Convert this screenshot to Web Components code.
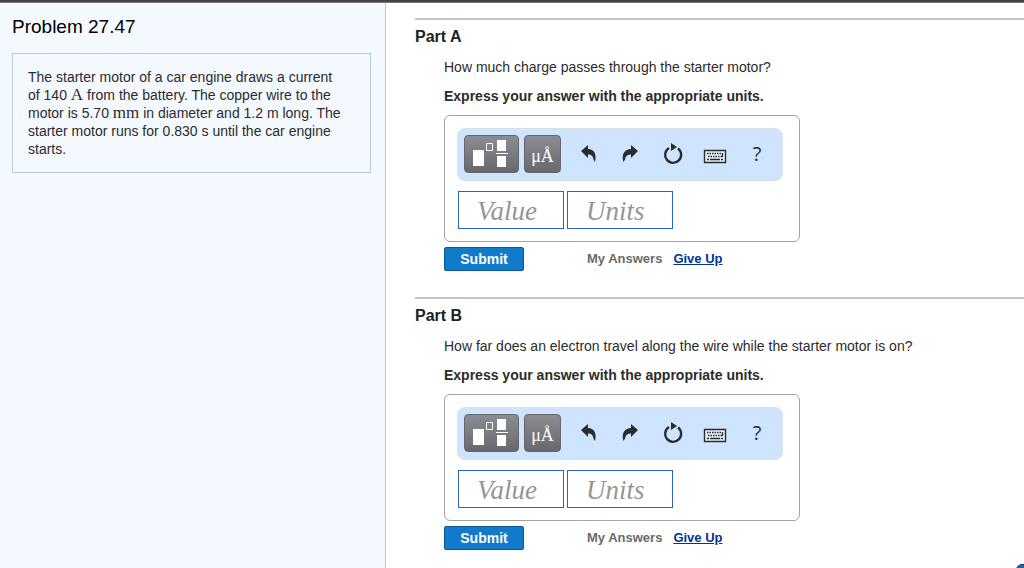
<!DOCTYPE html>
<html lang="en">
<head>
<meta charset="utf-8">
<title>Problem 27.47</title>
<style>
body { margin: 0; background: #fff; color: #2b2b2b; font: 14px/18px "Liberation Sans", Arial, sans-serif; }
</style>
</head>
<body>
<homework-page>
  <problem-panel slot="side" heading="Problem 27.47">The starter motor of a car engine draws a current of 140 <math-unit>A</math-unit> from the battery. The copper wire to the motor is 5.70 <math-unit>mm</math-unit> in diameter and 1.2 m long. The starter motor runs for 0.830 s until the car engine starts.</problem-panel>
  <problem-part heading="Part A">How much charge passes through the starter motor?</problem-part>
  <problem-part heading="Part B">How far does an electron travel along the wire while the starter motor is on?</problem-part>
</homework-page>
<script>
class BaseElement extends HTMLElement {
  constructor() {
    super();
    this.attachShadow({ mode: "open" });
  }
  connectedCallback() {
    this.shadowRoot.innerHTML = this.render();
  }
}

customElements.define("homework-page", class extends BaseElement {
  render() {
    return `<style>
      :host { display: flex; flex-direction: column; min-height: 100vh; }
      header { height: 3px; box-sizing: border-box; background: #444; border-bottom: 1px solid #777; }
      .columns { flex: 1; display: flex; }
      aside { flex: 0 1 386px; box-sizing: border-box; background: #f4f9ff; border-right: 1px solid #b4c8dd; }
      main { flex: 1; min-width: 0; padding: 15px 0 0 29px; display: flex; flex-direction: column; gap: 26px; }
      .corner { position: fixed; right: -20px; bottom: -26px; width: 28px; height: 30px; box-sizing: border-box; border: 1px solid #12386b; border-radius: 6px; background: #2462a8; }
    </style>
    <header></header>
    <div class="columns">
      <aside><slot name="side"></slot></aside>
      <main><slot></slot></main>
    </div>
    <div class="corner"></div>`;
  }
});

customElements.define("math-unit", class extends BaseElement {
  render() {
    return `<style>:host { display: inline; font-family: "Liberation Serif", "Times New Roman", serif; font-size: 17px; line-height: 14px; }</style><slot></slot>`;
  }
});

customElements.define("problem-panel", class extends BaseElement {
  render() {
    return `<style>
      :host { display: block; padding: 13px 14px 16px 12px; }
      h1 { margin: 0 0 15px; font-size: 19px; line-height: 22px; font-weight: 400; color: #000; }
      .statement { padding: 14px 25px 14px 15px; border: 1px solid #b4cbdf; }
    </style>
    <h1>${this.getAttribute("heading")}</h1>
    <div class="statement"><slot></slot></div>`;
  }
});

customElements.define("tool-bar", class extends BaseElement {
  render() {
    return `<style>
      :host { display: flex; align-items: flex-start; box-sizing: border-box; height: 53px; padding: 6px 6px 0; border: 1px solid #dcdfe4; border-radius: 8px; background: #cfe5ff; }
      button { flex: none; display: grid; place-items: center; padding: 0; border: 0; background: none; color: #2c2c2c; font: 20px/24px "Open Sans", sans-serif; width: 24px; height: 38px; margin-left: 18px; }
      .dark { border: 1px solid #66666c; border-radius: 4px; background: linear-gradient(#8c8c94, #68686c); color: #fff; box-sizing: border-box; }
      .template { width: 55px; margin-left: 0; }
      .units { width: 37px; margin: 0 -2px 0 5px; padding-top: 4px; font: 18px/20px "Liberation Serif", serif; }
      svg { display: block; }
    </style>
    <button class="dark template" aria-label="Templates"><svg width="53" height="36" viewBox="0 0 53 36">
      <path d="M8 14h11v16H8zM32 4h9v11h-9zM32 20h9v11h-9z" fill="#fff"/>
      <path d="M31 17h12v1H31z" fill="#fff"/>
      <path d="M21.500 7.500h6v7h-6z" fill="none" stroke="#fff"/>
    </svg></button>
    <button class="dark units" aria-label="Symbols">μÅ</button>
    <button aria-label="Undo"><svg width="24" height="24" viewBox="0 0 24 24"><path d="M4 9 11 3V7C17 7 20 12 18 20L16.500 17.500C16 14 14.500 12.500 11 12.500V16Z" fill="currentColor"/></svg></button>
    <button aria-label="Redo"><svg width="24" height="24" viewBox="0 0 24 24"><path d="M19 9 12 3V7C6 7 2 12 4.500 20L6 17.500C6.500 14 8.500 12.500 12 12.500V16Z" fill="currentColor"/></svg></button>
    <button aria-label="Reset"><svg width="24" height="24" viewBox="0 0 24 24"><path d="M8 6A8 8 0 1 0 17 6.500" fill="none" stroke="currentColor" stroke-width="2.400"/><path d="M10 1 16 5 10 9Z" fill="currentColor"/></svg></button>
    <button aria-label="Keyboard"><svg width="24" height="24" viewBox="0 0 24 24"><path d="M1.500 8.500h21v12h-21z" fill="#e5f1ff" stroke="#2c2c2c" stroke-width="1.400"/><path d="M4 11.500h15M5 14.500h14" stroke="#2c2c2c" stroke-width="1.500" stroke-dasharray="1.500 1"/><path d="M4 17.500h2M7 17.500h10M18 17.500h2M19.500 11v4" stroke="#2c2c2c" stroke-width="1.300"/></svg></button>
    <button aria-label="Help">?</button>`;
  }
});

customElements.define("answer-box", class extends BaseElement {
  render() {
    return `<style>
      :host { display: block; box-sizing: border-box; max-width: 356px; padding: 12px 16px 12px 12px; border: 1px solid #a3a3a3; border-radius: 6px; }
      .fields { display: flex; gap: 3px; margin: 10px 0 0 1px; }
      input { box-sizing: border-box; flex: 0 1 106px; min-width: 0; height: 38px; margin: 0; padding: 2px 0 0 18px; border: 1px solid #2b62c8; border-radius: 0; background: #fff; color: #333; font: italic 27px/34px "Liberation Serif", "Times New Roman", serif; }
      input::placeholder { color: #959595; opacity: 1; }
    </style>
    <tool-bar></tool-bar>
    <div class="fields">
      <input type="text" placeholder="Value" aria-label="Value">
      <input type="text" placeholder="Units" aria-label="Units">
    </div>`;
  }
});

customElements.define("problem-part", class extends BaseElement {
  render() {
    return `<style>
      :host { display: block; border-top: 2px solid #c4c4c4; padding-top: 7px; }
      h2 { margin: 0 0 11px; font-size: 16px; line-height: 20px; color: #222; }
      .body { margin-left: 29px; }
      p { margin: 0 0 11px; }
      .hint { font-weight: 700; margin-bottom: 10px; }
      .actions { display: flex; align-items: center; margin-top: 5px; font-size: 13px; font-weight: 700; color: #6a6a6a; }
      button { box-sizing: border-box; width: 80px; height: 24px; margin-right: 63px; padding: 0; border: 1px solid #0a5795; border-radius: 2px; background: #117acb; color: #fff; font: 700 14px/20px "Liberation Sans", Arial, sans-serif; }
      a { margin-left: 11px; color: #003399; }
    </style>
    <h2>${this.getAttribute("heading")}</h2>
    <div class="body">
      <p><slot></slot></p>
      <p class="hint">Express your answer with the appropriate units.</p>
      <answer-box></answer-box>
      <div class="actions"><button type="button">Submit</button><span>My Answers</span><a href="#">Give Up</a></div>
    </div>`;
  }
});
</script>
</body>
</html>
